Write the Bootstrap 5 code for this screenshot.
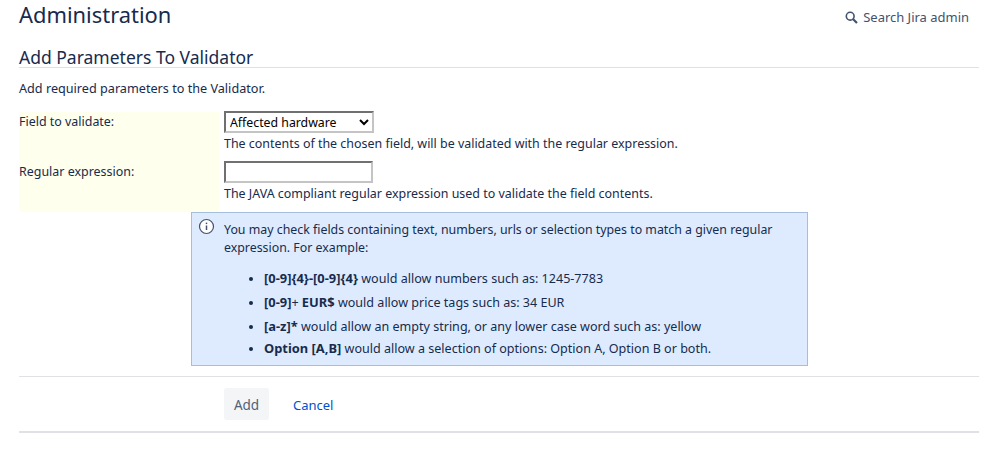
<!DOCTYPE html>
<html lang="en"><head><meta charset="utf-8"><title>Add Parameters To Validator</title>
<link href="https://cdn.jsdelivr.net/npm/bootstrap@5.3.0/dist/css/bootstrap.min.css" rel="stylesheet">
<style>
html,body{height:454px;overflow:hidden}
body{font-family:"Noto Sans","Open Sans",sans-serif;font-size:12.45px;line-height:18px;color:#172b4d;background:#fff}
.pg{padding:0 20px 0 19px}
.top-h{height:30px}
.top-h h1{font-size:21.9px;line-height:30px;font-weight:400;margin:0;color:#172b4d}
.srch{color:#42526e;font-size:12.97px;margin-top:8px;margin-right:10px;height:18px;gap:5px}
.sect{margin-top:17px;border-bottom:1px solid #dfe1e6;height:21px;font-size:17.5px;line-height:20px;font-weight:400;color:#172b4d}
.intro{margin:11px 0 15px;height:18px;font-size:12.65px}
.lab{width:200px;background:#ffffee;flex:none}
.lab div{height:50px;padding-top:1px}
.fld{margin-left:5px}
.fld>div{height:50px}
.sel{width:150px;height:22px;margin-top:-1px;font:12.3px/18px "Noto Sans",sans-serif;color:#000;padding:0;border:2px inset #c4c4c4;background:#fff;display:block}
.inp{width:149px;height:22px;border:2px inset #c4c4c4;background:#fff;display:block;padding:0}
.hint{margin-top:2px;height:18px}
.msg{margin-left:172px;width:617px;height:154px;background:#deebff;border:1px solid #a5bedd;padding:8px 10px 0 32px}
.msg svg{left:6px;top:5px}
.msg p{margin:0 0 11px;font-size:12.37px}
.msg ul{margin:0;padding-left:40px;font-size:12.55px}
.msg li{height:24px;line-height:18px;padding-top:1px}
.msg li:last-child{margin-top:-2px}
.msg b{font-size:12.9px}
.rule{border-top:1px solid #dfe1e6;margin-top:10px;height:55px;padding:11px 0 0 205px;gap:24px}
.addb{background:#f4f5f7;color:#505f79;border:0;width:45px;height:32px;font-size:13.5px;padding:2px 0 0;border-radius:3px}
.canc{color:#0052cc;font-size:13px;line-height:34px;text-decoration:none}
.bot{border-top:2px solid #dfe1e6}
</style></head><body>
<div class="pg">
 <header class="top-h d-flex justify-content-between align-items-start">
  <h1>Administration</h1>
  <div class="srch d-flex align-items-center">
   <svg width="13" height="13" viewBox="0 0 13 13" fill="none" stroke="#42526e"><circle cx="5.2" cy="5.2" r="3.9" stroke-width="1.6"/><path d="M8.2 8.2 12 12" stroke-width="2.2"/></svg>
   <span>Search Jira admin</span>
  </div>
 </header>
 <h2 class="sect">Add Parameters To Validator</h2>
 <p class="intro">Add required parameters to the Validator.</p>
 <form>
  <div class="d-flex">
   <div class="lab"><div>Field to validate:</div><div>Regular expression:</div></div>
   <div class="fld">
    <div><select class="sel"><option>Affected hardware</option></select><div class="hint">The contents of the chosen field, will be validated with the regular expression.</div></div>
    <div><input class="inp" type="text"><div class="hint">The JAVA compliant regular expression used to validate the field contents.</div></div>
   </div>
  </div>
  <div class="msg position-relative">
   <svg class="position-absolute" width="17" height="17" viewBox="0 0 17 17" fill="none" stroke="#42526e"><circle cx="8.5" cy="8.5" r="7" stroke-width="1.2" fill="#fff"/><path d="M8.5 7.5v4.5" stroke-width="1.5"/><path d="M8.5 4.6v1.5" stroke-width="1.5"/></svg>
   <p>You may check fields containing text, numbers, urls or selection types to match a given regular expression. For example:</p>
   <ul>
    <li><b>[0-9]{4}-[0-9]{4}</b> would allow numbers such as: 1245-7783</li>
    <li><b>[0-9]</b>+ <b>EUR$</b> would allow price tags such as: 34 EUR</li>
    <li><b>[a-z]*</b> would allow an empty string, or any lower case word such as: yellow</li>
    <li><b>Option [A,B]</b> would allow a selection of options: Option A, Option B or both.</li>
   </ul>
  </div>
  <div class="rule d-flex align-items-start">
   <button type="button" class="addb btn">Add</button>
   <a class="canc" href="#">Cancel</a>
  </div>
  <div class="bot"></div>
 </form>
</div>
<script src="https://cdn.jsdelivr.net/npm/bootstrap@5.3.0/dist/js/bootstrap.bundle.min.js"></script>
</body></html>
